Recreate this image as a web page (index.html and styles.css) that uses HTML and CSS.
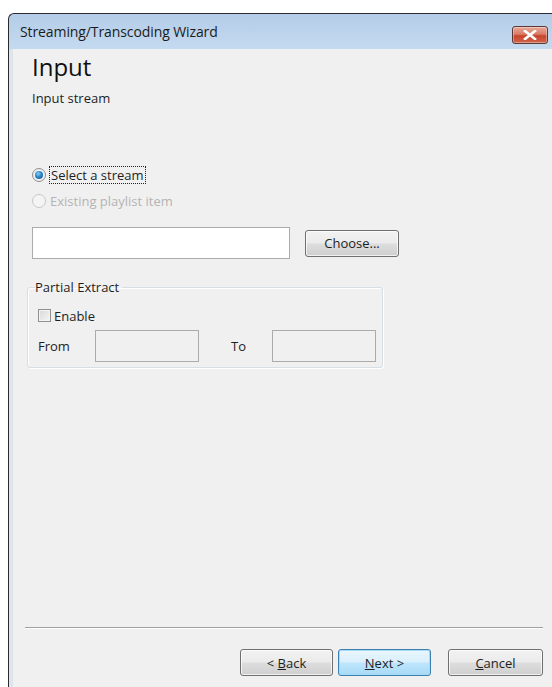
FILE: index.html
```html
<!DOCTYPE html>
<html>
<head>
<meta charset="utf-8">
<title>Streaming/Transcoding Wizard</title>
<link rel="stylesheet" href="styles.css">
</head>
<body>
<div class="window">
  <div class="titlebar">
    <span class="title">Streaming/Transcoding Wizard</span>
    <button class="close" aria-label="Close">
      <svg width="14" height="10" viewBox="0 0 14 10"><path d="M2 1 L12 9 M12 1 L2 9" stroke="#fff" stroke-width="2.6" stroke-linecap="square"/></svg>
    </button>
  </div>
  <div class="client">
    <div class="page">
      <h1 class="heading">Input</h1>
      <p class="subheading">Input stream</p>

      <div class="choices">
        <label class="radio checked"><span class="dot"></span><span class="focus">Select a stream</span></label>
        <label class="radio disabled"><span class="dot"></span><span>Existing playlist item</span></label>
      </div>

      <div class="source-row">
        <div class="field wide"></div>
        <button class="btn choose">Choose...</button>
      </div>

      <fieldset class="group">
        <legend>Partial Extract</legend>
        <label class="check"><span class="box"></span>Enable</label>
        <div class="range">
          <span class="lbl from">From</span>
          <div class="field small"></div>
          <span class="lbl to">To</span>
          <div class="field small"></div>
        </div>
      </fieldset>
    </div>

    <div class="footer">
      <div class="sep"></div>
      <div class="buttons">
        <button class="btn">&lt; <u>B</u>ack</button>
        <button class="btn default"><u>N</u>ext &gt;</button>
        <button class="btn cancel"><u>C</u>ancel</button>
      </div>
    </div>
  </div>
</div>
</body>
</html>
```
FILE: styles.css
```css
html, body {
  margin: 0;
  padding: 0;
  background: #ffffff;
}

body {
  font-family: "Open Sans", "Noto Sans", sans-serif;
  font-size: 13px;
  color: #1e1e1e;
  overflow: hidden;
  height: 687px;
}

.window {
  margin: 13px 0 0 8px;
  height: 674px;
  border-top: 1px solid #2a2a2a;
  border-left: 1px solid #2a2a2a;
  border-top-left-radius: 6px;
  background: linear-gradient(#b4cce7, #c4daf0 35px, #dce6f0 36px);
  display: flex;
  flex-direction: column;
  padding-left: 3px;
  box-sizing: border-box;
}

.titlebar {
  height: 35px;
  flex: none;
  display: flex;
  align-items: center;
  justify-content: space-between;
  padding: 0 4px 0 8px;
}

.title {
  font-size: 14px;
  color: #1b1b1b;
  letter-spacing: -0.1px;
}

.close {
  width: 36px;
  height: 18px;
  margin-top: 6px;
  border: 1px solid #5b3a36;
  border-radius: 3px;
  background: linear-gradient(#e9a99a 0%, #d97c66 45%, #c7452c 55%, #d0644a 100%);
  display: flex;
  align-items: center;
  justify-content: center;
  padding: 0;
  box-shadow: inset 0 0 0 1px rgba(255,255,255,0.35);
}

.client {
  flex: 1;
  background: #f0f0f0;
  display: flex;
  flex-direction: column;
  border-left: 1px solid #dfe3e8;
}

.page {
  flex: 1;
  padding: 0 0 0 19px;
}

.heading {
  margin: 3px 0 0 0;
  font-size: 24px;
  font-weight: normal;
  line-height: 30px;
  color: #101010;
}

.subheading {
  margin: 7px 0 0 0;
  line-height: 18px;
}

.choices {
  margin-top: 59px;
  display: flex;
  flex-direction: column;
  gap: 8px;
}

.radio {
  display: flex;
  align-items: center;
  gap: 4px;
  height: 18px;
}

.radio .dot {
  width: 12px;
  height: 12px;
  border-radius: 50%;
  border: 1px solid #8e8f8f;
  background: radial-gradient(circle, #ffffff 0%, #e6e6e6 100%);
  position: relative;
  box-sizing: content-box;
}

.radio.checked .dot::after {
  content: "";
  position: absolute;
  left: 2px;
  top: 2px;
  width: 8px;
  height: 8px;
  border-radius: 50%;
  background: radial-gradient(circle at 40% 35%, #8fd0f5 0%, #2a86c8 45%, #0c4f8a 100%);
}

.radio .focus {
  outline: 1px dotted #222;
  outline-offset: 0;
  padding: 0 1px;
  line-height: 16px;
}

.radio.disabled {
  color: #b4b4b4;
}

.radio.disabled .dot {
  border-color: #c8c8c8;
  background: #f4f4f4;
}

.source-row {
  margin-top: 17px;
  display: flex;
  align-items: center;
  gap: 15px;
}

.field {
  background: #ffffff;
  border: 1px solid #ababab;
  box-sizing: border-box;
}

.field.wide {
  width: 258px;
  height: 32px;
}

.btn {
  font-family: inherit;
  font-size: 13px;
  color: #1e1e1e;
  height: 27px;
  border: 1px solid #707070;
  border-radius: 3px;
  background: linear-gradient(#f2f2f2 0%, #ebebeb 48%, #dddddd 52%, #cfcfcf 100%);
  box-shadow: inset 0 0 0 1px rgba(255,255,255,0.7);
  padding: 0;
}

.btn.choose {
  width: 94px;
}

.btn u {
  text-decoration: underline;
}

.btn.default {
  border-color: #3c7fb1;
  background: linear-gradient(#eaf6fd 0%, #d9f0fc 48%, #bee6fd 52%, #a7d9f5 100%);
  box-shadow: inset 0 0 0 1px #a8dbf6;
}

.group {
  margin: 20px 0 0 -5px;
  width: 356px;
  height: 89px;
  border: 1px solid #d5dfe5;
  border-radius: 3px;
  padding: 0 0 0 10px;
  box-sizing: border-box;
  box-shadow: inset 1px 1px 0 #ffffff, 1px 1px 0 #ffffff;
}

.group legend {
  padding: 0 3px 0 0;
  margin-left: -3px;
  line-height: 16px;
}

.check {
  display: flex;
  align-items: center;
  gap: 3px;
  margin-top: 12px;
  height: 17px;
}

.check .box {
  width: 11px;
  height: 11px;
  border: 1px solid #8f8f8f;
  background: linear-gradient(135deg, #d9d9d9, #f5f5f5);
  box-shadow: inset 0 0 0 1px #f4f4f4;
}

.range {
  display: flex;
  align-items: center;
  margin-top: 6px;
}

.lbl.from {
  width: 57px;
}

.lbl.to {
  width: 41px;
  margin-left: 32px;
}

.field.small {
  width: 104px;
  height: 32px;
  background: #f0f0f0;
}

.footer {
  flex: none;
  height: 60px;
  padding: 0 9px 0 12px;
}

.sep {
  height: 1px;
  background: #a0a0a0;
  border-bottom: 1px solid #ffffff;
}

.buttons {
  display: flex;
  justify-content: flex-end;
  gap: 5px;
  margin-top: 20px;
}

.buttons .btn {
  width: 93px;
}

.buttons .btn.cancel {
  width: 95px;
  margin-left: 12px;
}
```
